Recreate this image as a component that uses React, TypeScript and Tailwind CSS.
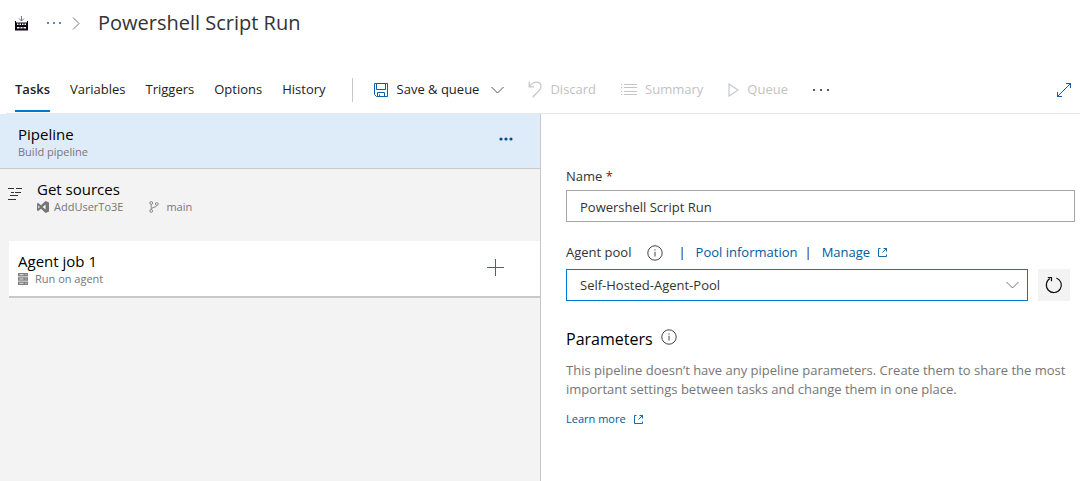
import type { ReactNode } from "react";

function SaveIcon() {
  return (
    <svg width="16" height="16" viewBox="0 0 16 16" fill="none" stroke="#0b5ea8" aria-hidden="true">
      <path d="M1.5 1.5h13v13h-11l-2-2z" />
      <path d="M3.5 1.5v6h9v-6M4.5 14.5v-4h7v4M6.5 14.5v-2" />
    </svg>
  );
}

function ChevronDown() {
  return (
    <svg width="13" height="8" viewBox="0 0 13 8" fill="none" stroke="currentColor" aria-hidden="true">
      <path d="M0.5 1l6 6 6-6" />
    </svg>
  );
}

function UndoIcon() {
  return (
    <svg width="14" height="17" viewBox="0 0 14 17" fill="none" stroke="#c8c8c8" strokeWidth="1.3" aria-hidden="true">
      <path d="M1.2 0.8v5h5M1.4 5.6C3.5 2.6 5.6 1.2 8.4 1.2c3 0 4.6 2 4.6 4.4 0 1.7-.7 2.8-2 4.1L4.6 16.2" />
    </svg>
  );
}

function ListIcon() {
  return (
    <svg width="16" height="12" viewBox="0 0 16 12" fill="none" stroke="#c4c4c4" aria-hidden="true">
      <path d="M0 .5h1.2M0 3.5h1.2M0 7.5h1.2M0 10.5h1.2M3 .5h13M3 3.5h13M3 7.5h13M3 10.5h13" />
    </svg>
  );
}

function PlayIcon() {
  return (
    <svg width="11" height="14" viewBox="0 0 11 14" fill="none" stroke="#c4c8d0" strokeWidth="1.2" aria-hidden="true">
      <path d="M1 1l9 6-9 6z" />
    </svg>
  );
}

function ExpandIcon() {
  return (
    <svg width="16" height="16" viewBox="0 0 16 16" fill="none" stroke="#1458a8" aria-hidden="true">
      <path d="M1.5 14.5l13-13M10 1.5h4.500V6M1.5 10v4.500H6" />
    </svg>
  );
}

function InfoIcon() {
  return (
    <svg width="16" height="16" viewBox="0 0 16 16" fill="none" stroke="#444" aria-hidden="true">
      <circle cx="8" cy="8" r="7.2" />
      <path d="M8 6.8v4.7M8 4.4v1.2" />
    </svg>
  );
}

function ExternalIcon() {
  return (
    <svg width="9" height="9" viewBox="0 0 9 9" fill="none" stroke="currentColor" strokeWidth="0.9" aria-hidden="true">
      <path d="M2.500 .5H.5v8h8v-2M4.500 4.500l4-4M5.500 .5h3v3" />
    </svg>
  );
}

function RefreshIcon() {
  return (
    <svg width="18" height="18" viewBox="0 0 18 18" fill="none" stroke="#111" strokeWidth="1.2" aria-hidden="true">
      <path d="M11.4 2A7.5 7.5 0 1 1 5 2.6M2.8 1.500H6.500V5.300" />
    </svg>
  );
}

function BuildIcon() {
  return (
    <svg width="13" height="15" viewBox="0 0 13 15" aria-hidden="true">
      <path d="M0 5h1v1.500h11V5h1v9.500H0z" fill="#0d0614" />
      <path d="M2 7.500h1.500V9H2zM4.500 7.500H6V9H4.500zM7 7.500h1.500V9H7zM9.500 7.500H11V9H9.500zM2 11h2.500v1.500H2zM5.500 11h2v1.500h-2zM8.500 11H11v1.500H8.500z" fill="#fff" />
      <path d="M6.500 0v5M4 2.500L6.500 5 9 2.500" fill="none" stroke="#777" />
    </svg>
  );
}

function SourcesIcon() {
  return (
    <svg width="15" height="12" viewBox="0 0 15 12" fill="none" stroke="#333" aria-hidden="true">
      <path d="M0 .5h6M8 .5h6M3 4.500h3M7 4.500h6M2 7.500h8M0 11.500h8" />
    </svg>
  );
}

function RepoIcon() {
  return (
    <svg width="12" height="12" viewBox="0 0 12 12" aria-hidden="true">
      <path fillRule="evenodd" fill="#767676" d="M8.500 0L12 1.400v9.200L8.500 12 4 7.700 1.200 10 0 9.400V2.600L1.200 2 4 4.300zM8.600 3.500L5.600 6l3 2.500zM1.300 4.400v3.200L2.900 6z" />
    </svg>
  );
}

function BranchIcon() {
  return (
    <svg width="10" height="12" viewBox="0 0 10 12" fill="none" stroke="#8a8a8a" aria-hidden="true">
      <circle cx="2.200" cy="2" r="1.400" />
      <circle cx="7.800" cy="3" r="1.400" />
      <circle cx="2.200" cy="10" r="1.400" />
      <path d="M2.200 3.400v5.200M7.800 4.400c0 2.400-5.600 1.400-5.600 4" />
    </svg>
  );
}

function ServerIcon() {
  return (
    <svg width="10" height="12" viewBox="0 0 10 12" aria-hidden="true">
      <path d="M0 0h10v3.400H0zM0 4.300h10v3.400H0zM0 8.600h10V12H0z" fill="#808080" />
      <path d="M1.500 1.700h4M1.500 6h4M1.500 10.300h4M7.500 1.700h1M7.500 6h1M7.500 10.300h1" stroke="#e4e4e4" />
    </svg>
  );
}

function Dots({ width, radius }: { width: number; radius: number }) {
  return (
    <svg width={width} height="4" viewBox={`0 0 ${width} 4`} fill="currentColor" aria-hidden="true">
      <circle cx="2" cy="2" r={radius} />
      <circle cx={width / 2} cy="2" r={radius} />
      <circle cx={width - 2} cy="2" r={radius} />
    </svg>
  );
}

function Tab({ label, active = false }: { label: string; active?: boolean }) {
  return (
    <button
      type="button"
      role="tab"
      aria-selected={active}
      className={
        active
          ? "h-[42px] border-b-2 border-[#0078d4] font-semibold text-[#222]"
          : "h-[42px] border-b-2 border-transparent text-[#222]"
      }
    >
      {label}
    </button>
  );
}

function Command({ icon, label }: { icon: ReactNode; label: string }) {
  return (
    <button type="button" disabled className="flex items-center gap-2 text-[#c2c2c2]">
      {icon}
      {label}
    </button>
  );
}

export default function App() {
  return (
    <div className="flex min-h-screen flex-col bg-white pr-[9px] font-['Open_Sans','Noto_Sans',sans-serif] text-[13px] text-[#333]">
      <header>
        <div className="flex h-[46px] items-center pl-[15px]">
          <BuildIcon />
          <button type="button" aria-label="Show parent folders" className="ml-[18px] text-[#2c5f94]">
            <Dots width={16} radius={1} />
          </button>
          <svg className="ml-[10px]" width="8" height="13" viewBox="0 0 8 13" fill="none" stroke="#777" aria-hidden="true">
            <path d="M1 .5l6 6-6 6" />
          </svg>
          <h1 className="ml-[18px] text-[20px] text-[#333]">Powershell Script Run</h1>
        </div>
        <div className="ml-[6px] flex h-[68px] items-end border-b border-[#e6e6e6] pl-[9px]">
          <div role="tablist" className="flex gap-5 pb-px">
            <Tab label="Tasks" active />
            <Tab label="Variables" />
            <Tab label="Triggers" />
            <Tab label="Options" />
            <Tab label="History" />
          </div>
          <div className="ml-[26px] flex h-[47px] flex-1 items-center">
            <div className="h-6 w-px bg-[#c8c8c8]" />
            <button type="button" className="ml-5 flex items-center gap-2 text-[#222]">
              <SaveIcon />
              Save &amp; queue
              <span className="ml-1 text-[#555]"><ChevronDown /></span>
            </button>
            <div className="ml-6 flex gap-[25px]">
              <Command icon={<UndoIcon />} label="Discard" />
              <Command icon={<ListIcon />} label="Summary" />
              <Command icon={<PlayIcon />} label="Queue" />
            </div>
            <button type="button" aria-label="More commands" className="ml-6 text-[#222]">
              <Dots width={18} radius={1} />
            </button>
            <button type="button" aria-label="Full screen" className="mr-2 ml-auto">
              <ExpandIcon />
            </button>
          </div>
        </div>
      </header>

      <main className="flex flex-1">
        <section className="w-1/2 bg-[#f3f3f3]">
          <div className="flex h-[55px] items-start border-b border-[#c8c8c8] bg-[#deecf9] pt-[10px] pr-[27px] pl-[18px]">
            <div className="flex-1">
              <h2 className="text-[15px] leading-5 text-black">Pipeline</h2>
              <p className="text-[11px] leading-4 text-[#767676]">Build pipeline</p>
            </div>
            <button type="button" aria-label="Pipeline actions" className="flex h-[30px] items-center text-[#004e8c]">
              <Dots width={14} radius={1.6} />
            </button>
          </div>
          <div className="flex h-[72px] gap-[14px] pt-[10px] pl-2">
            <div className="pt-[9px]">
              <SourcesIcon />
            </div>
            <div>
              <h2 className="text-[15px] leading-5 text-black">Get sources</h2>
              <div className="flex gap-[26px] text-[11px] leading-4 text-[#767676]">
                <span className="flex items-center gap-[5px]">
                  <RepoIcon />
                  AddUserTo3E
                </span>
                <span className="flex items-center gap-[7px]">
                  <BranchIcon />
                  main
                </span>
              </div>
            </div>
          </div>
          <div className="ml-[9px] flex h-[57px] items-center border-b-2 border-[#c8c8c8] bg-white pr-9 pl-[9px]">
            <div className="flex-1">
              <h2 className="text-[15px] leading-5 text-black">Agent job 1</h2>
              <p className="flex items-center gap-[7px] text-[11px] leading-4 text-[#767676]">
                <ServerIcon />
                Run on agent
              </p>
            </div>
            <button type="button" aria-label="Add a task to Agent job 1" className="pb-[3px]">
              <svg width="17" height="17" viewBox="0 0 17 17" fill="none" stroke="#3b62ad" aria-hidden="true">
                <path d="M8.500 0v17M0 8.500h17" />
              </svg>
            </button>
          </div>
        </section>

        <section className="w-1/2 border-l border-[#c8c8c8] pt-[52px] pr-[5px] pl-[25px]">
          <label htmlFor="pipeline-name" className="block h-6 leading-5">
            Name <span className="text-[#a80000]">*</span>
          </label>
          <input
            id="pipeline-name"
            defaultValue="Powershell Script Run"
            className="h-8 w-full border border-[#a6a6a6] bg-white px-[13px] pt-px text-[#333] outline-none"
          />
          <div className="mt-5 flex h-[27px] items-start leading-5">
            <label htmlFor="agent-pool">Agent pool</label>
            <button type="button" aria-label="About agent pools" className="mt-[3px] ml-4">
              <InfoIcon />
            </button>
            <span className="ml-[15px] text-[#222]">|</span>
            <a href="#pool" className="ml-[10px] text-[#005a9e]">Pool information</a>
            <span className="ml-[7px] text-[#222]">|</span>
            <a href="#manage" className="ml-[10px] flex items-center gap-2 text-[#005a9e]">
              Manage
              <ExternalIcon />
            </a>
          </div>
          <div className="flex gap-[10px] pr-[5px]">
            <div className="relative flex-1">
              <select
                id="agent-pool"
                className="h-8 w-full appearance-none border border-[#0078d4] bg-white px-[13px] pt-px text-[#333] outline-none"
              >
                <option>Self-Hosted-Agent-Pool</option>
              </select>
              <span className="pointer-events-none absolute inset-y-0 right-[9px] flex items-center text-[#777]">
                <ChevronDown />
              </span>
            </div>
            <button type="button" aria-label="Refresh" className="flex size-8 items-center justify-center bg-[#f3f3f3]">
              <RefreshIcon />
            </button>
          </div>
          <div className="mt-6 flex gap-2">
            <h2 className="text-[16px] leading-7 text-black">Parameters</h2>
            <button type="button" aria-label="About parameters" className="mt-1 self-start">
              <InfoIcon />
            </button>
          </div>
          <p className="mt-2 leading-[19px] text-[#767676]">
            This pipeline doesn’t have any pipeline parameters. Create them to share the most important settings
            between tasks and change them in one place.
          </p>
          <a href="#learn" className="mt-3 flex items-center gap-2 text-[11px] leading-4 text-[#005a9e]">
            Learn more
            <ExternalIcon />
          </a>
        </section>
      </main>
    </div>
  );
}
